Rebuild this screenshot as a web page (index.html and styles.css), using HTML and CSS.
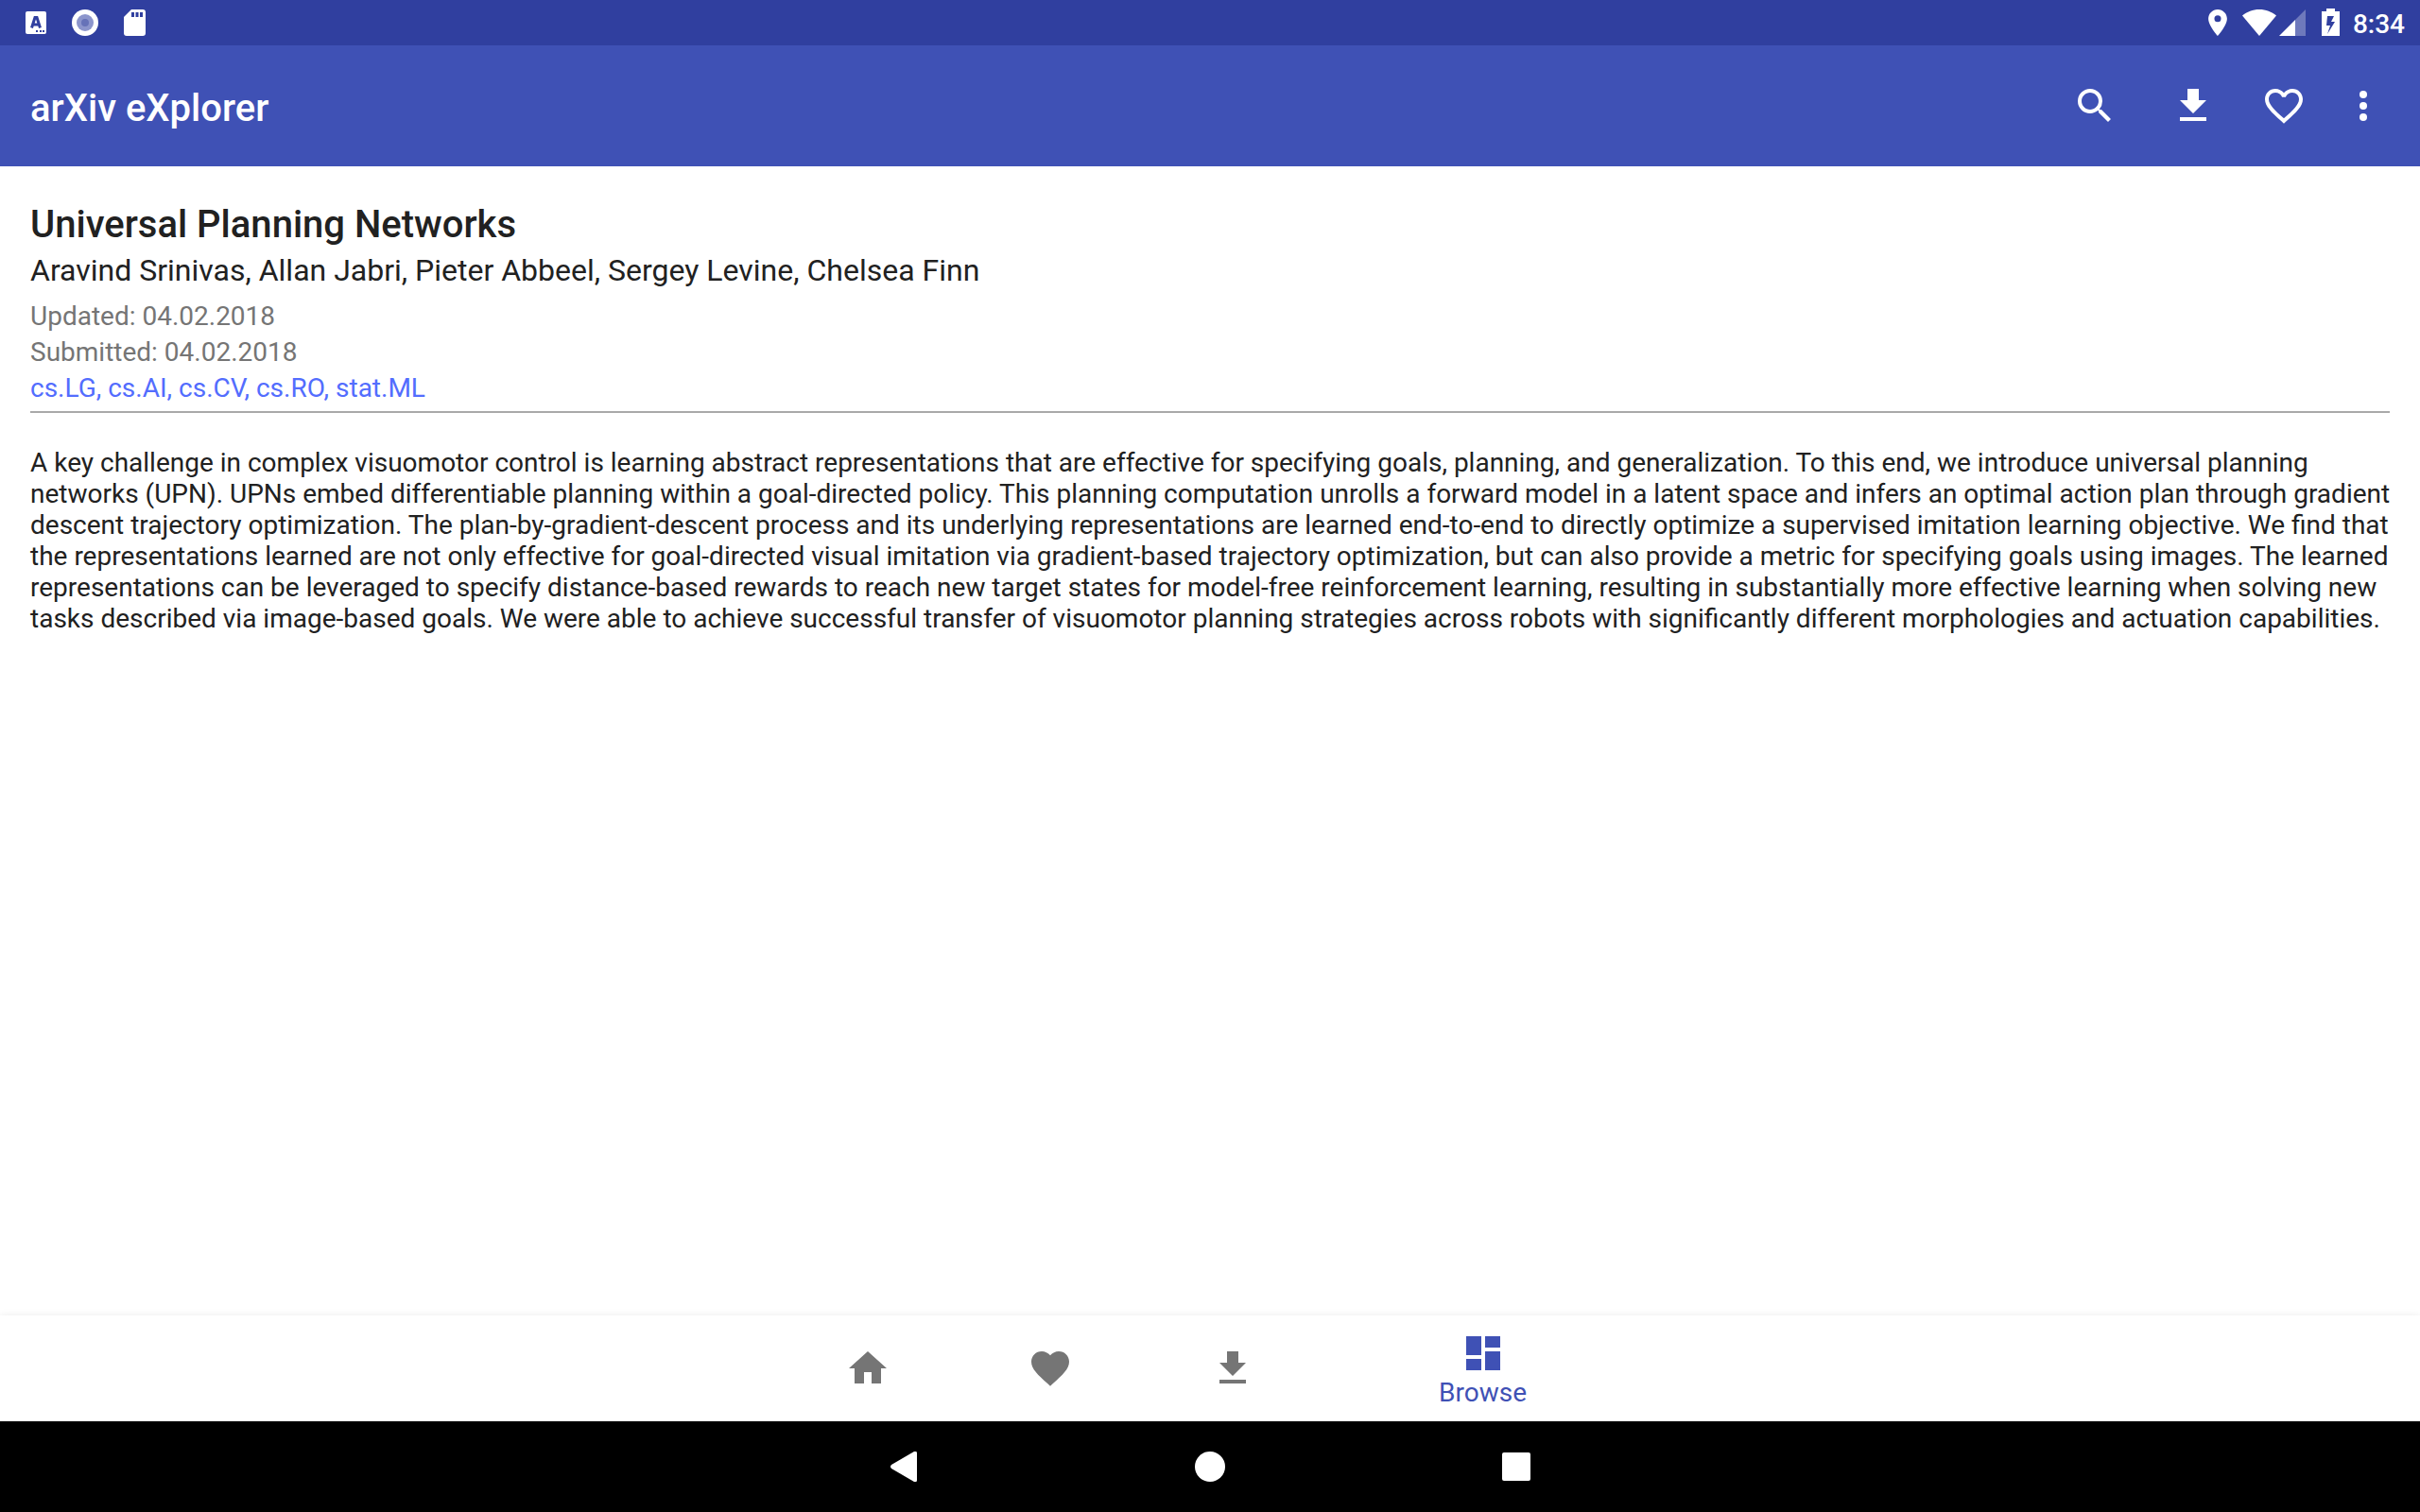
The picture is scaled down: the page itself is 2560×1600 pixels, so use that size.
FILE: index.html
```html
<!DOCTYPE html>
<html lang="en">
<head>
<meta charset="utf-8">
<title>arXiv eXplorer</title>
<link rel="stylesheet" href="styles.css">
</head>
<body>
<div class="status-bar">
  <div class="status-group status-left">
    <svg class="icon-status" viewBox="0 0 36 36" aria-hidden="true"><rect x="7" y="6" width="22" height="24" rx="2" fill="#fff"/><path fill="none" stroke="#303f9f" stroke-width="3" d="M13.500 23.500L17 12.500h2l3.500 11M15 20h6"/><path fill="#303f9f" d="M18 26h2v2h-2zM22 26h2v2h-2zM25 26h2v2h-2z"/></svg>
    <svg class="icon-status" viewBox="0 0 36 36" aria-hidden="true"><circle cx="18" cy="18" r="14" fill="#fff"/><circle cx="18" cy="18" r="9" fill="#8c95cc"/><circle cx="18" cy="18" r="4" fill="#6672b8"/></svg>
    <svg class="icon-status" viewBox="0 0 36 36" aria-hidden="true"><path fill="#fff" fill-rule="evenodd" d="M15 4h12q3 0 3 3v22q0 3-3 3H10q-3 0-3-3V12zM15 7v5h3V7zm4.500 0v5h3V7zm4.500 0v5h3V7z"/></svg>
  </div>
  <div class="status-group">
    <svg width="24" height="34" viewBox="3.500 0 17 24" aria-hidden="true"><path fill="#fff" d="M12 2C8.130 2 5 5.130 5 9c0 5.250 7 13 7 13s7-7.750 7-13c0-3.870-3.130-7-7-7zm0 9.500a2.500 2.500 0 0 1 0-5 2.500 2.500 0 0 1 0 5z"/></svg>
    <div class="network">
      <svg width="36" height="28" viewBox="0 0 36 28" aria-hidden="true"><path fill="#fff" d="M0 6.500C5 2.500 11 0 18 0s13 2.500 18 6.500L18 28z"/></svg>
      <svg width="28" height="28" viewBox="0 0 28 28" aria-hidden="true"><path fill="#fff" fill-opacity=".3" d="M28 0v28H17V11z"/><path fill="#fff" d="M17 11v17H0z"/></svg>
    </div>
    <svg width="22" height="30" viewBox="-3 0 22 30" aria-hidden="true"><path fill="#fff" fill-rule="evenodd" d="M5 0h9v3h5v26H0V3h5zM6 8l-1 10h4l-3 9 8-13h-4l3-6z"/></svg>
    <time class="clock">8:34</time>
  </div>
</div>
<header class="app-bar">
  <h1 class="app-title">arXiv eXplorer</h1>
  <div class="actions">
    <button class="action action-search" aria-label="Search"><svg class="icon" viewBox="0 0 24 24"><path d="M15.500 14h-.790l-.280-.270A6.471 6.471 0 0 0 16 9.500 6.500 6.500 0 1 0 9.500 16c1.610 0 3.090-.590 4.230-1.570l.270.280v.790l5 4.990L20.490 19l-4.990-5zm-6 0C7.010 14 5 11.990 5 9.500S7.010 5 9.500 5 14 7.010 14 9.500 11.990 14 9.500 14z"/></svg></button>
    <button class="action" aria-label="Download"><svg class="icon" viewBox="0 0 24 24"><path d="M19 9h-4V3H9v6H5l7 7 7-7zM5 18v2h14v-2H5z"/></svg></button>
    <button class="action" aria-label="Favorite"><svg class="icon" viewBox="0 0 24 24"><path d="M16.500 3c-1.740 0-3.410.810-4.500 2.090C10.910 3.810 9.240 3 7.500 3 4.420 3 2 5.420 2 8.500c0 3.780 3.400 6.860 8.550 11.540L12 21.350l1.450-1.320C18.600 15.360 22 12.280 22 8.500 22 5.420 19.580 3 16.500 3zm-4.400 15.550l-.1.100-.1-.1C7.140 14.240 4 11.390 4 8.500 4 6.500 5.500 5 7.500 5c1.540 0 3.040.990 3.570 2.360h1.870C13.460 5.990 14.960 5 16.500 5c2 0 3.500 1.500 3.500 3.500 0 2.890-3.140 5.740-7.900 10.050z"/></svg></button>
    <button class="action action-more" aria-label="More options"><svg class="icon" viewBox="0 0 24 24"><circle cx="12" cy="6" r="2"/><circle cx="12" cy="12" r="2"/><circle cx="12" cy="18" r="2"/></svg></button>
  </div>
</header>
<main class="paper">
  <h2 class="paper-title">Universal Planning Networks</h2>
  <p class="authors">Aravind Srinivas, Allan Jabri, Pieter Abbeel, Sergey Levine, Chelsea Finn</p>
  <p class="meta">Updated: 04.02.2018</p>
  <p class="meta">Submitted: 04.02.2018</p>
  <p class="meta categories">cs.LG, cs.AI, cs.CV, cs.RO, stat.ML</p>
  <p class="abstract">A key challenge in complex visuomotor control is learning abstract representations that are effective for specifying goals, planning, and generalization. To this end, we introduce universal planning<br>
  networks (UPN). UPNs embed differentiable planning within a goal-directed policy. This planning computation unrolls a forward model in a latent space and infers an optimal action plan through gradient<br>
  descent trajectory optimization. The plan-by-gradient-descent process and its underlying representations are learned end-to-end to directly optimize a supervised imitation learning objective. We find that<br>
  the representations learned are not only effective for goal-directed visual imitation via gradient-based trajectory optimization, but can also provide a metric for specifying goals using images. The learned<br>
  representations can be leveraged to specify distance-based rewards to reach new target states for model-free reinforcement learning, resulting in substantially more effective learning when solving new<br>
  tasks described via image-based goals. We were able to achieve successful transfer of visuomotor planning strategies across robots with significantly different morphologies and actuation capabilities.</p>
</main>
<nav class="tabs" aria-label="Sections">
  <button class="tab" aria-label="Home"><svg class="icon" viewBox="0 0 24 24"><path d="M10 20v-6h4v6h5v-8h3L12 3 2 12h3v8z"/></svg></button>
  <button class="tab" aria-label="Favorites"><svg class="icon" viewBox="0 0 24 24"><path d="M12 21.350l-1.450-1.320C5.400 15.360 2 12.280 2 8.500 2 5.420 4.420 3 7.500 3c1.740 0 3.410.810 4.500 2.090C13.090 3.810 14.760 3 16.500 3 19.580 3 22 5.420 22 8.500c0 3.780-3.400 6.860-8.550 11.540L12 21.350z"/></svg></button>
  <button class="tab" aria-label="Downloads"><svg class="icon" viewBox="0 0 24 24"><path d="M19 9h-4V3H9v6H5l7 7 7-7zM5 18v2h14v-2H5z"/></svg></button>
  <button class="tab tab-active"><svg class="icon" viewBox="0 0 24 24"><path d="M3 13h8V3H3v10zm0 8h8v-6H3v6zm10 0h8V11h-8v10zm0-18v6h8V3h-8z"/></svg>Browse</button>
</nav>
<div class="system-nav">
  <button class="system-key" aria-label="Back"><svg class="key-icon" viewBox="0 0 32 32"><path d="M27 0q3-1 3 2v28q0 3-3 2L3 18q-2-2 0-4z"/></svg></button>
  <button class="system-key" aria-label="Home screen"><svg class="key-icon" viewBox="0 0 32 32"><circle cx="16" cy="16" r="16"/></svg></button>
  <button class="system-key" aria-label="Recent apps"><svg class="key-icon" viewBox="0 0 32 32"><rect x="1" y="1" width="30" height="30" rx="2"/></svg></button>
</div>
</body>
</html>
```

FILE: styles.css
```css
* {
  box-sizing: border-box;
}

body {
  display: flex;
  flex-direction: column;
  min-height: 100vh;
  margin: 0;
  background: #fff;
  color: #212121;
  font-family: Roboto, sans-serif;
  font-size: 28px;
}

h1, h2, p {
  margin: 0;
}

button {
  padding: 0;
  border: 0;
  background: none;
  color: inherit;
  font: inherit;
}

svg {
  display: block;
  flex: none;
}

.status-bar {
  display: flex;
  align-items: center;
  justify-content: space-between;
  height: 48px;
  padding: 0 16px 0 20px;
  background: #303f9f;
  color: #fff;
}

.status-group {
  display: flex;
  align-items: center;
  gap: 14px;
}

.status-left {
  gap: 16px;
}

.icon-status {
  width: 36px;
  height: 36px;
}

.network {
  display: flex;
  gap: 3px;
}

.clock {
  padding-top: 4px;
  font-weight: 500;
  line-height: 32px;
}

.app-bar {
  display: flex;
  align-items: center;
  justify-content: space-between;
  height: 128px;
  padding: 0 24px 0 32px;
  background: #3f51b5;
  color: #fff;
}

.app-title {
  padding-top: 6px;
  font-size: 40px;
  font-weight: 500;
  line-height: 48px;
}

.actions {
  display: flex;
}

.action {
  display: flex;
  align-items: center;
  justify-content: center;
  width: 96px;
  height: 96px;
}

.action-search {
  margin-right: 8px;
}

.action-more {
  width: 72px;
}

.icon {
  width: 48px;
  height: 48px;
  fill: currentColor;
}

.paper {
  flex: 1;
  padding: 38px 32px;
}

.paper-title {
  font-size: 40px;
  font-weight: 500;
  line-height: 48px;
}

.authors {
  margin-bottom: 6px;
  font-size: 32px;
  line-height: 48px;
}

.meta {
  color: #757575;
  line-height: 38px;
}

.categories {
  padding-bottom: 5px;
  border-bottom: 2px solid #a9a9a9;
  color: #536dfe;
}

/* The abstract may run a little into the page's right margin. */
.abstract {
  margin: 36px -16px 0 0;
  line-height: 33px;
}

.tabs {
  display: flex;
  justify-content: center;
  height: 112px;
  padding-right: 2px;
  background: #fff;
  box-shadow: 0 0 8px rgba(0, 0, 0, .08);
}

.tab {
  display: flex;
  flex-direction: column;
  align-items: center;
  justify-content: center;
  width: 193px;
  color: #757575;
}

.tab-active {
  width: 337px;
  padding-top: 4px;
  color: #3f51b5;
  line-height: 36px;
}

.system-nav {
  display: flex;
  justify-content: center;
  height: 96px;
  background: #000;
}

.system-key {
  display: flex;
  align-items: center;
  justify-content: center;
  width: 324px;
}

.key-icon {
  width: 32px;
  height: 32px;
  fill: #fff;
}
```
